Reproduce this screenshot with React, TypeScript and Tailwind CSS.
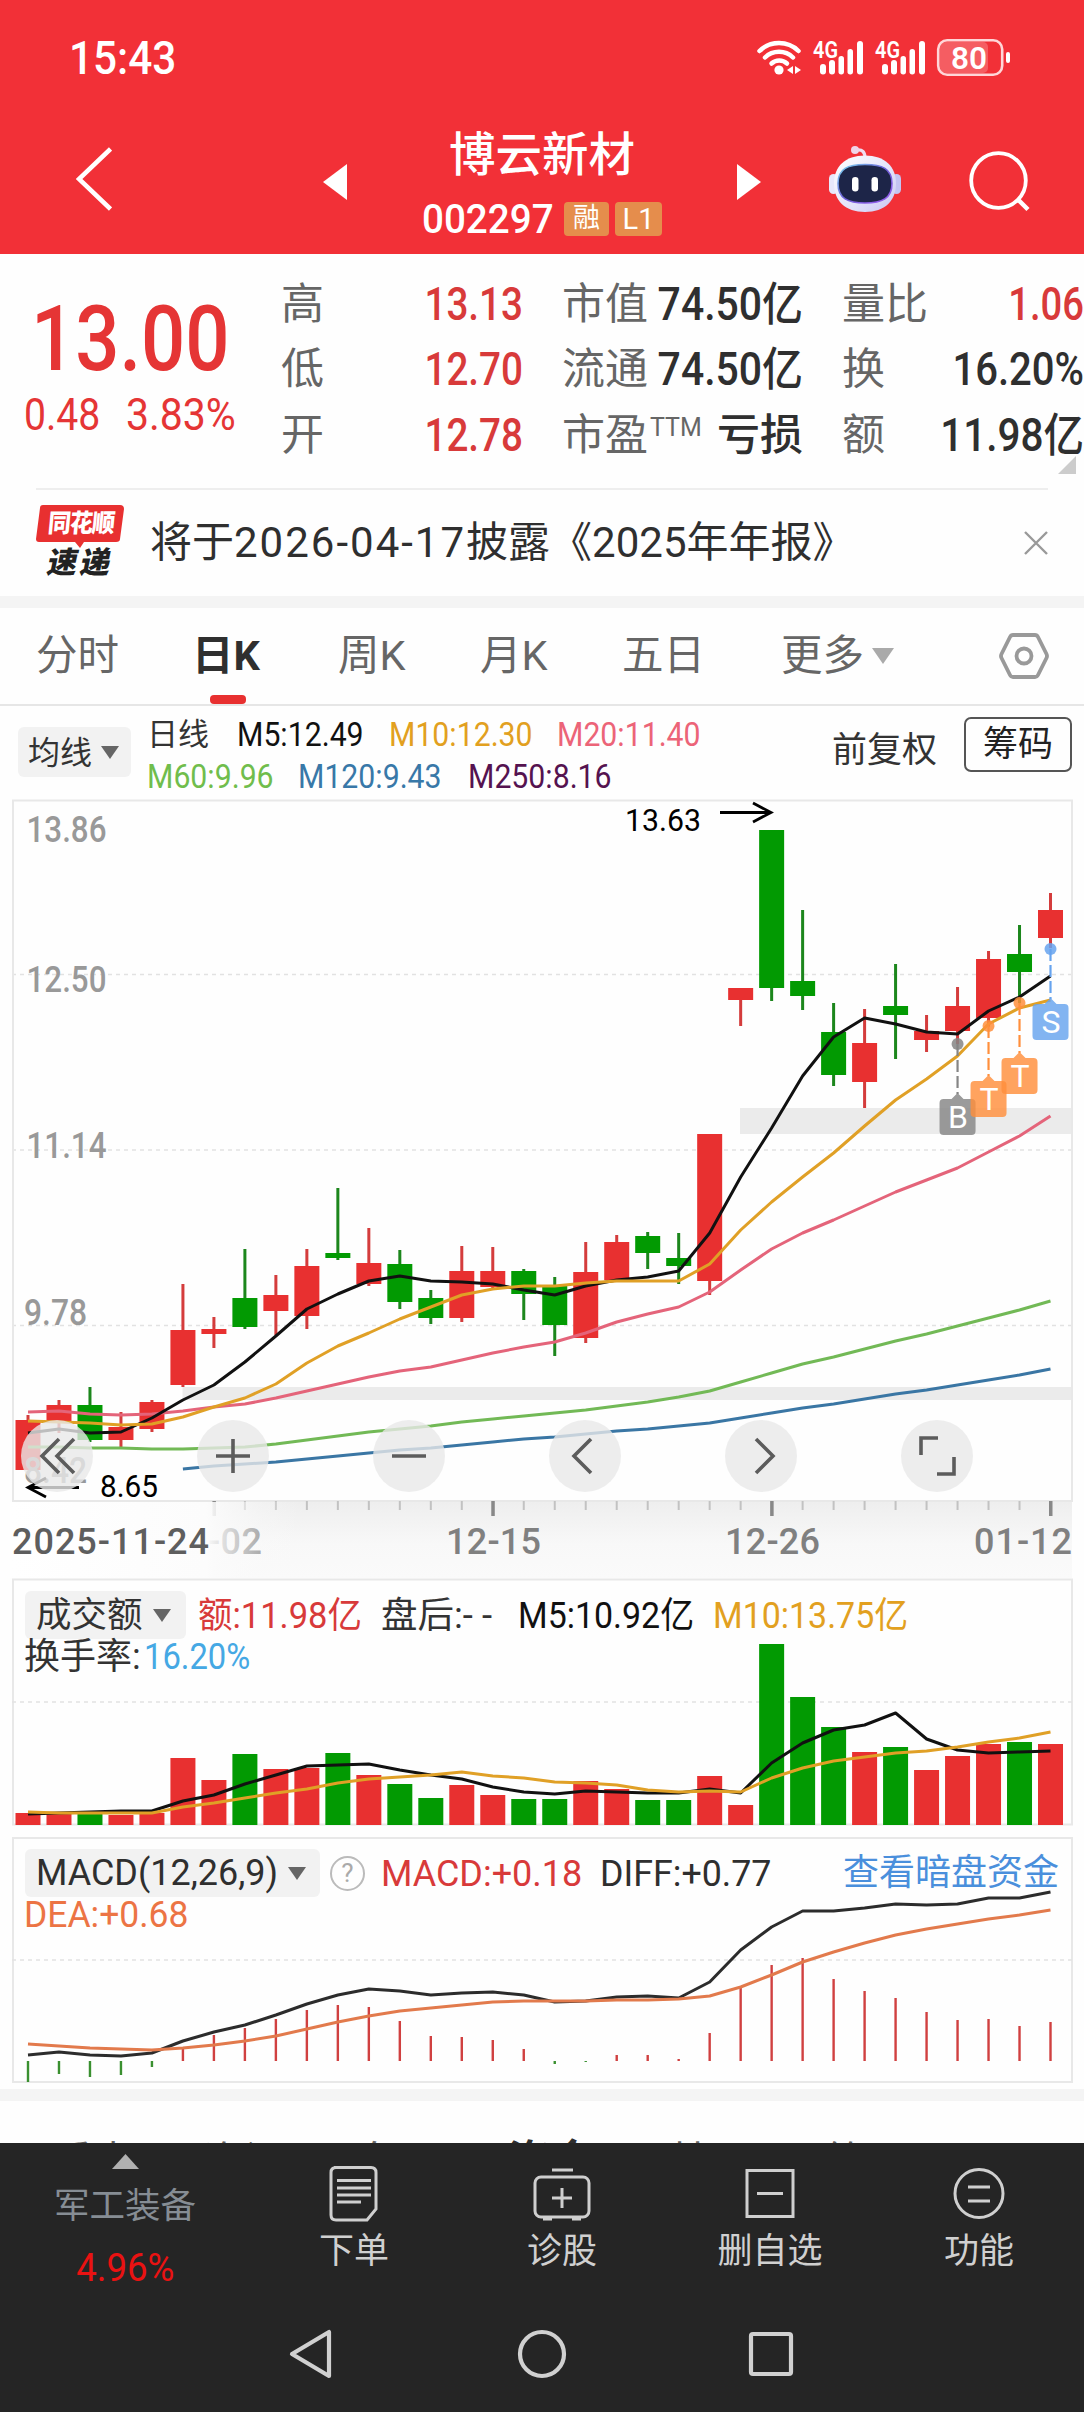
import type { ReactNode } from "react";

const red = "#e83030";
const green = "#029a02";

// [up/down, high, body top, body bottom, low]
type Candle = [string, number, number, number, number];

const candles: Candle[] = [
  ["r", 1415, 1420, 1470, 1470],
  ["r", 1400, 1405, 1421, 1433],
  ["g", 1387, 1405, 1440, 1442],
  ["r", 1412, 1427, 1440, 1447],
  ["r", 1400, 1402, 1429, 1432],
  ["r", 1284, 1330, 1385, 1387],
  ["r", 1317, 1329, 1334, 1348],
  ["g", 1249, 1298, 1327, 1329],
  ["r", 1275, 1295, 1311, 1335],
  ["r", 1249, 1266, 1316, 1329],
  ["g", 1188, 1253, 1258, 1260],
  ["r", 1228, 1263, 1284, 1286],
  ["g", 1250, 1264, 1302, 1309],
  ["g", 1290, 1298, 1318, 1324],
  ["r", 1246, 1271, 1318, 1322],
  ["r", 1247, 1271, 1287, 1289],
  ["g", 1269, 1271, 1294, 1320],
  ["g", 1277, 1285, 1325, 1356],
  ["r", 1242, 1272, 1338, 1343],
  ["r", 1235, 1242, 1280, 1280],
  ["g", 1232, 1236, 1253, 1269],
  ["g", 1233, 1258, 1266, 1284],
  ["r", 1134, 1134, 1281, 1295],
  ["r", 988, 988, 1000, 1026],
  ["g", 830, 830, 988, 1001],
  ["g", 910, 981, 996, 1010],
  ["g", 1003, 1032, 1075, 1086],
  ["r", 1009, 1043, 1082, 1108],
  ["g", 964, 1006, 1015, 1059],
  ["r", 1015, 1031, 1040, 1052],
  ["r", 987, 1006, 1031, 1044],
  ["r", 951, 959, 1018, 1027],
  ["g", 925, 954, 972, 1003],
  ["r", 893, 910, 938, 948],
];

const ma5 = [1433, 1429, 1433, 1432, 1418, 1400, 1385, 1362, 1336, 1309, 1294, 1281, 1276, 1281, 1282, 1284, 1290, 1295, 1286, 1280, 1277, 1271, 1233, 1177, 1128, 1076, 1037, 1018, 1024, 1032, 1034, 1011, 997, 976];
const ma10 = [1421, 1422, 1423, 1425, 1424, 1417, 1407, 1398, 1384, 1363, 1346, 1333, 1319, 1307, 1295, 1289, 1286, 1286, 1283, 1281, 1281, 1281, 1264, 1230, 1202, 1177, 1153, 1126, 1100, 1079, 1056, 1024, 1008, 1000];
const ma20 = [1412, 1411, 1414, 1415, 1414, 1411, 1407, 1404, 1398, 1391, 1384, 1377, 1371, 1367, 1360, 1353, 1347, 1342, 1333, 1322, 1314, 1307, 1292, 1270, 1249, 1233, 1220, 1206, 1192, 1180, 1168, 1152, 1136, 1116];
const ma60 = [1447, 1447, 1448, 1448, 1449, 1449, 1448, 1447, 1444, 1440, 1436, 1432, 1429, 1426, 1422, 1419, 1416, 1413, 1410, 1406, 1402, 1397, 1391, 1382, 1373, 1364, 1357, 1349, 1341, 1334, 1326, 1318, 1310, 1301];
const ma120 = [1469, 1466, 1464, 1462, 1459, 1456, 1453, 1450, 1448, 1445, 1442, 1439, 1437, 1434, 1431, 1429, 1426, 1423, 1418, 1413, 1408, 1404, 1399, 1394, 1390, 1385, 1380, 1375, 1369];

const volume = [1813, 1814, 1814, 1815, 1813, 1758, 1780, 1754, 1769, 1768, 1753, 1775, 1784, 1798, 1785, 1795, 1799, 1799, 1781, 1789, 1800, 1800, 1776, 1805, 1644, 1697, 1727, 1752, 1747, 1770, 1756, 1744, 1742, 1744];
const volumeMa5 = [1814, 1813, 1812, 1811, 1811, 1801, 1795, 1784, 1775, 1766, 1765, 1764, 1770, 1775, 1779, 1787, 1792, 1794, 1791, 1792, 1793, 1793, 1789, 1793, 1763, 1743, 1730, 1725, 1713, 1739, 1750, 1753, 1752, 1751];
const volumeMa10 = [1812, 1813, 1813, 1813, 1813, 1807, 1803, 1798, 1793, 1789, 1783, 1779, 1777, 1775, 1772, 1776, 1778, 1782, 1783, 1785, 1790, 1792, 1791, 1792, 1778, 1768, 1761, 1757, 1753, 1751, 1747, 1742, 1738, 1732];

const macd = [2082, 2074, 2077, 2075, 2067, 2049, 2035, 2028, 2019, 2010, 2005, 2007, 2021, 2036, 2037, 2040, 2049, 2064, 2062, 2055, 2055, 2059, 2033, 1987, 1965, 1958, 1979, 1991, 1998, 2012, 2020, 2019, 2026, 2022];
const diff = [2055, 2052, 2055, 2056, 2053, 2041, 2032, 2025, 2015, 2004, 1995, 1989, 1991, 1995, 1993, 1992, 1995, 2002, 2001, 1997, 1996, 1998, 1982, 1950, 1927, 1911, 1911, 1908, 1904, 1905, 1904, 1898, 1898, 1892];
const dea = [2044, 2046, 2048, 2049, 2050, 2048, 2045, 2041, 2036, 2029, 2022, 2016, 2011, 2008, 2005, 2002, 2001, 2001, 2001, 2000, 2000, 1999, 1996, 1987, 1975, 1962, 1952, 1943, 1935, 1929, 1924, 1919, 1915, 1910];

const cx = (i: number) => 28 + i * 30.985;

function Line({ data, color, from = 0, width = 3 }: { data: number[]; color: string; from?: number; width?: number }) {
  const points = data.map((y, i) => `${cx(i + from).toFixed(1)},${y}`).join(" ");
  return <polyline points={points} fill="none" stroke={color} strokeWidth={width} strokeLinejoin="round" />;
}

function Grid({ y }: { y: number }) {
  return <line x1="12" x2="1072" y1={y} y2={y} stroke="#e2e2e2" strokeWidth="1.5" strokeDasharray="4 4" />;
}

type LabelProps = {
  x: number;
  y: number;
  w: number;
  size: number;
  fill: string;
  weight?: number;
  adjust?: "spacing" | "spacingAndGlyphs";
  children: string;
};

function Label({ x, y, w, size, fill, weight = 500, adjust = "spacingAndGlyphs", children }: LabelProps) {
  return (
    <text x={x} y={y} textLength={w} lengthAdjust={adjust} fontSize={size} fontWeight={weight} fill={fill}>
      {children}
    </text>
  );
}

function Caret({ className }: { className: string }) {
  return (
    <svg viewBox="0 0 18 13" className={className} fill="currentColor">
      <path d="M0 0h18L9 13z" />
    </svg>
  );
}

// Narrow digits; the box keeps its width and the text is squeezed towards one side.
function Num({ className = "", children }: { className?: string; children: ReactNode }) {
  return <span className={`block whitespace-nowrap ${className}`}>{children}</span>;
}

function StatusBar() {
  return (
    <div className="flex h-[114px] items-center pl-[69px] pt-[1px]">
      <Num className="w-[688px] origin-left scale-x-[0.90] text-[47px] font-medium leading-[60px]">15:43</Num>
      <svg viewBox="757 30 254 52" className="h-[52px] w-[254px]">
        <g fill="none" stroke="#fff" strokeWidth="4.5" strokeLinecap="round">
          <path d="M759.500 49a28 28 0 0 1 39 0" />
          <path d="M765 55.500a20 20 0 0 1 28 0" />
          <path d="M771.500 61.500a11.500 11.500 0 0 1 15.500 0" />
        </g>
        <circle cx="779" cy="68" r="4.600" fill="#fff" />
        <path d="M793 64v8l-6-4zM795 64v8l6-4z" fill="#fff" />
        {[0, 62].map((dx) => (
          <g key={dx} transform={`translate(${dx} 0)`} fill="#fff">
            <text x="813" y="55.500" fontSize="23" fontWeight="600" textLength="25" lengthAdjust="spacingAndGlyphs">4G</text>
            <rect x="820" y="62" width="6" height="10.500" rx="3" />
            <rect x="829" y="58" width="6" height="14.500" rx="3" />
            <rect x="838.500" y="54" width="5.500" height="18.500" rx="2.700" />
            <rect x="847.500" y="47" width="5.500" height="25.500" rx="2.700" />
            <rect x="857" y="39" width="6" height="33.500" rx="3" />
          </g>
        ))}
        <rect x="940" y="40" width="48" height="31" rx="5" fill="#fff" fillOpacity="0.220" />
        <rect x="938.200" y="38.200" width="64" height="34.600" rx="9" fill="none" stroke="#ffd6d8" strokeWidth="2.600" />
        <rect x="1006" y="50" width="4" height="11" rx="2" fill="#fff" />
        <text x="951" y="66.500" fontSize="32" fontWeight="600" fill="#fff" textLength="36" lengthAdjust="spacingAndGlyphs">80</text>
      </svg>
    </div>
  );
}

function Robot() {
  return (
    <svg viewBox="828 145 74 68" className="ml-[67px] mt-[31px] h-[68px] w-[74px]">
      <defs>
        <linearGradient id="shell" x1="0" y1="0" x2="1" y2="1">
          <stop offset="0" stopColor="#fff" />
          <stop offset="0.600" stopColor="#e2e2fa" />
          <stop offset="1" stopColor="#c9c6f2" />
        </linearGradient>
        <linearGradient id="rim" x1="0" y1="0" x2="1" y2="1">
          <stop offset="0" stopColor="#7ad6f0" />
          <stop offset="0.500" stopColor="#6f5fd8" />
          <stop offset="1" stopColor="#9a5cf0" />
        </linearGradient>
      </defs>
      <path d="M857 150q8-1 8 8" fill="none" stroke="#efdcf0" strokeWidth="3.200" />
      <circle cx="855" cy="150" r="4" fill="#f0d4e8" />
      <rect x="829" y="174" width="9" height="20" rx="4.500" fill="#e8e8fb" />
      <rect x="892" y="174" width="9" height="20" rx="4.500" fill="#c4c4f2" />
      <path d="M865 155.500c20 0 31 11 31 28s-11 28.500-31 28.500-31-11.500-31-28.500 11-28 31-28z" fill="url(#shell)" />
      <path d="M865 164.500c17 0 27 4 27 19s-10 19.500-27 19.500-27-4.500-27-19.500 10-19 27-19z" fill="#1d2548" stroke="url(#rim)" strokeWidth="1.600" />
      <rect x="852" y="177" width="6.500" height="14.500" rx="3.200" fill="#fff" />
      <rect x="871.500" y="177" width="6.500" height="14.500" rx="3.200" fill="#fff" />
    </svg>
  );
}

function Header() {
  return (
    <header className="h-[254px] bg-[#f23037] text-white">
      <StatusBar />
      <div className="flex h-[140px] items-start">
        <svg viewBox="0 0 36 64" className="ml-[76px] mt-[33px] h-[64px] w-[36px]" fill="none" stroke="#fff" strokeWidth="4.500">
          <path d="M34.500 2L3 32l31.500 30" />
        </svg>
        <svg viewBox="0 0 24 36" className="ml-[211px] mt-[50px] h-[36px] w-[24px]" fill="#fff"><path d="M24 0v36L0 18z" /></svg>
        <div className="ml-[45px] flex w-[300px] flex-col items-center pt-px">
          <h1 className="text-[46.500px] font-medium leading-[80px]">博云新材</h1>
          <div className="flex h-[48px] w-[240px] items-center">
            <Num className="w-[142px] origin-left scale-x-[0.930] text-[41.500px] font-medium leading-[48px]">002297</Num>
            <span className="h-[34px] w-[45px] rounded-[4px] bg-[#e58d4c] text-center text-[27px] leading-[33px]">融</span>
            <span className="ml-[6px] h-[34px] w-[47px] rounded-[4px] bg-[#e58d4c] text-center text-[29px] leading-[35px]">L1</span>
          </div>
        </div>
        <svg viewBox="0 0 24 36" className="ml-[45px] mt-[50px] h-[36px] w-[24px]" fill="#fff"><path d="M0 0v36l24-18z" /></svg>
        <Robot />
        <svg viewBox="0 0 62 62" className="ml-[67px] mt-[37px] h-[62px] w-[62px]" fill="none" stroke="#fff" strokeWidth="3.800">
          <circle cx="29.500" cy="29.500" r="27.300" />
          <path d="M48.500 48L59 58.500" strokeWidth="4.500" />
        </svg>
      </div>
    </header>
  );
}

function Stat({ label, sup, value, className = "" }: { label: string; sup?: string; value: string; className?: string }) {
  return (
    <div className="flex h-[65.500px] items-center justify-between">
      <span className="flex items-center whitespace-nowrap text-[43px] leading-[60px] text-[#666]">
        {label}
        {sup ? <span className="mb-[13px] ml-[2px] text-[25px] leading-[30px]">{sup}</span> : null}
      </span>
      <Num className={`w-0 origin-right font-medium leading-[60px] ${className}`}>
        <span className="float-right">{value}</span>
      </Num>
    </div>
  );
}

function Quote() {
  return (
    <section className="relative flex h-[234px]">
      <div className="w-[281px] pl-[31px] pt-[34px] text-[#e53535]">
        <Num className="origin-left scale-x-[0.865] text-[90px] font-medium leading-[104px]">13.00</Num>
        <div className="-ml-[7px] -mt-px flex">
          <Num className="w-[102px] origin-left scale-x-[0.870] text-[45px] leading-[48px]">0.48</Num>
          <Num className="w-[150px] origin-left scale-x-[0.910] text-[45px] leading-[48px]">3.83%</Num>
        </div>
      </div>
      <div className="grid w-[803px] grid-cols-[242px_241px_242px] gap-x-[39px] pt-[17px]">
        <div>
          <Stat label="高" value="13.13" className="scale-x-[0.840] text-[46px] text-[#d83a3a]" />
          <Stat label="低" value="12.70" className="scale-x-[0.840] text-[46px] text-[#d83a3a]" />
          <Stat label="开" value="12.78" className="scale-x-[0.840] text-[46px] text-[#d83a3a]" />
        </div>
        <div>
          <Stat label="市值" value="74.50亿" className="scale-x-[0.890] text-[46px] text-[#2f2f2f]" />
          <Stat label="流通" value="74.50亿" className="scale-x-[0.890] text-[46px] text-[#2f2f2f]" />
          <Stat label="市盈" sup="TTM" value="亏损" className="text-[43px] text-[#2f2f2f]" />
        </div>
        <div>
          <Stat label="量比" value="1.06" className="scale-x-[0.830] text-[46px] text-[#d83a3a]" />
          <Stat label="换" value="16.20%" className="scale-x-[0.870] text-[46px] text-[#2f2f2f]" />
          <Stat label="额" value="11.98亿" className="scale-x-[0.880] text-[46px] text-[#2f2f2f]" />
        </div>
      </div>
      <svg viewBox="0 0 18 18" className="absolute bottom-[14px] right-[8px] size-[18px]" fill="#ccc"><path d="M18 0v18H0z" /></svg>
    </section>
  );
}

function News() {
  return (
    <section className="mx-[36px] flex h-[108px] items-center border-t-2 border-[#eee]">
      <div className="relative flex w-[89px] flex-col items-center">
        <svg viewBox="0 0 88 50" className="absolute left-0 top-0 h-[50px] w-[88px]">
          <path d="M7 0h77q4 0 4 4l-4 30q0 3-4 3H48l-4 6-5-6H3q-3 0-3-3L4 3q0-3 3-3z" fill={red} />
        </svg>
        <span className="relative -skew-x-6 scale-y-110 text-[23px] font-black leading-[38px] tracking-[-1px] text-white">同花顺</span>
        <span className="mt-[2px] -skew-x-12 text-[30px] font-black leading-[36px] tracking-[3px] text-[#222]">速递</span>
      </div>
      <p className="ml-[25px] whitespace-nowrap text-[42px] leading-[60px] text-[#2f2f2f]">
        将于<span className="tracking-[2px]">2026-04-17</span>披露《2025年年报》
      </p>
      <svg viewBox="0 0 24 24" className="ml-auto size-[24px]" stroke="#999" strokeWidth="2.400"><path d="M1 1l22 22M23 1L1 23" /></svg>
    </section>
  );
}

function Tabs() {
  return (
    <nav className="flex h-[98px] items-center border-b-2 border-[#e6e6e6] pl-[36px] text-[41.500px] leading-[98px] text-[#666]">
      <span className="w-[156px]">分时</span>
      <span className="relative w-[146px] font-bold text-[#2f2f2f]">
        日K
        <i className="absolute bottom-px left-[18px] h-[9px] w-[36px] rounded-[4px] bg-[#e83030]" />
      </span>
      <span className="w-[142px]">周K</span>
      <span className="w-[142px]">月K</span>
      <span className="w-[159px]">五日</span>
      <span className="flex w-[218px] items-center">
        更多
        <Caret className="ml-[8px] h-[18px] w-[22px] text-[#aaa]" />
      </span>
      <svg viewBox="0 0 50 46" className="h-[46px] w-[50px]" fill="none" stroke="#999" strokeWidth="3.800" strokeLinejoin="round">
        <path d="M14 2h22q2 0 3 2l8.500 17q1 2 0 4L39 42q-1 2-3 2H14q-2 0-3-2L2.500 25q-1-2 0-4L11 4q1-2 3-2z" />
        <circle cx="25" cy="23" r="7.500" />
      </svg>
    </nav>
  );
}

function MaBar() {
  return (
    <section className="flex h-[92px] pl-[18px]">
      <div className="mt-[21px] flex h-[50px] w-[113px] items-center rounded-[6px] bg-[#f2f2f2] pl-[10px] pt-px text-[32px] text-[#333]">
        均线
        <Caret className="ml-[9px] h-[13px] w-[18px] text-[#666]" />
      </div>
      <div className="ml-[16px] w-[685px] pt-[8px] text-[32.500px] leading-[42px]">
        <div className="flex">
          <span className="w-[90px] text-[31px] text-[#333]">日线</span>
          <Num className="w-[152px] origin-left scale-x-[0.930] text-[#111]">M5:12.49</Num>
          <Num className="w-[168px] origin-left scale-x-[0.930] text-[#e2a020]">M10:12.30</Num>
          <Num className="w-[168px] origin-left scale-x-[0.930] text-[#ec6478]">M20:11.40</Num>
        </div>
        <div className="flex">
          <Num className="w-[151px] origin-left scale-x-[0.930] text-[#70bd4c]">M60:9.96</Num>
          <Num className="w-[170px] origin-left scale-x-[0.930] text-[#3878a8]">M120:9.43</Num>
          <Num className="w-[168px] origin-left scale-x-[0.930] text-[#551350]">M250:8.16</Num>
        </div>
      </div>
      <span className="mt-[24px] w-[132px] whitespace-nowrap text-[35px] leading-[42px] text-[#333]">前复权</span>
      <span className="mt-[11px] h-[55px] w-[108px] rounded-[7px] border-2 border-[#555] text-center text-[35px] leading-[51px] text-[#222]">筹码</span>
    </section>
  );
}

const markers = [
  { i: 30, dot: 1044, top: 1099, label: "B", color: "#858585" },
  { i: 31, dot: 1026, top: 1081, label: "T", color: "#ff8f3c" },
  { i: 32, dot: 1003, top: 1058, label: "T", color: "#ff8f3c" },
  { i: 33, dot: 949, top: 1004, label: "S", color: "#66a3ee" },
];

function Markers() {
  return (
    <g>
      {markers.map((m) => {
        const x = cx(m.i);
        return (
          <g key={m.i}>
            <circle cx={x} cy={m.dot} r="6" fill={m.color} fillOpacity="0.850" />
            <line x1={x} x2={x} y1={m.dot} y2={m.top - 5} stroke={m.color} strokeWidth="2.200" strokeDasharray="12 4" />
            <path d={`M${x - 14} ${m.top}h8l6-6 6 6h8q4 0 4 4v28q0 4-4 4h-28q-4 0-4-4v-28q0-4 4-4z`} fill={m.color} fillOpacity="0.820" />
            <text x={x + 0.500} y={m.top + 29} textAnchor="middle" fontSize="32" fill="#fff">{m.label}</text>
          </g>
        );
      })}
    </g>
  );
}

function KLineChart() {
  return (
    <svg viewBox="0 798 1084 780" className="block h-[780px] w-[1084px]">
      <defs>
        <linearGradient id="axis" x1="0" y1="0" x2="0" y2="1">
          <stop offset="0" stopColor="#eeeeee" />
          <stop offset="0.550" stopColor="#f8f8f8" />
          <stop offset="1" stopColor="#fafafa" />
        </linearGradient>
        <linearGradient id="fade" x1="0" y1="0" x2="1" y2="0">
          <stop offset="0" stopColor="#fcfcfc" />
          <stop offset="0.100" stopColor="#fbfbfb" stopOpacity="0.850" />
          <stop offset="0.550" stopColor="#fafafa" stopOpacity="0.350" />
          <stop offset="1" stopColor="#fafafa" stopOpacity="0" />
        </linearGradient>
        <linearGradient id="edge" x1="0" y1="0" x2="1" y2="0">
          <stop offset="0" stopColor="#fff" />
          <stop offset="1" stopColor="#fcfcfc" />
        </linearGradient>
      </defs>
      <rect x="12" y="1502" width="1060" height="76" fill="url(#axis)" />
      <rect x="740" y="1108" width="332" height="26" fill="#ebebeb" />
      <rect x="182.500" y="1387" width="889.500" height="13" fill="#ebebeb" />
      <Grid y={974.500} />
      <Grid y={1150} />
      <Grid y={1325.500} />
      <rect x="13" y="800.500" width="1059" height="700.500" fill="none" stroke="#e8e8e8" strokeWidth="2" />

      <Label x={26.500} y={842} w={80} size={36} fill="#999">13.86</Label>
      <Label x={26.500} y={992} w={80} size={36} fill="#999">12.50</Label>
      <Label x={26.500} y={1158} w={80} size={36} fill="#999">11.14</Label>
      <Label x={24} y={1325} w={63} size={36} fill="#999">9.78</Label>

      {candles.map(([dir, high, top, bottom, low], i) => (
        <g key={i} fill={dir === "r" ? red : green}>
          <rect x={cx(i) - 1.500} y={high} width="3" height={low - high} fill={dir === "r" ? "#d43c3c" : "#1c861c"} />
          <rect x={cx(i) - 12.500} y={top} width="25" height={bottom - top} />
        </g>
      ))}
      <Label x={24} y={1483} w={63} size={36} fill="#999">8.42</Label>

      <Line data={ma60} color="#72b956" />
      <Line data={ma120} color="#3a76a4" from={5} />
      <Line data={ma20} color="#e4647a" />
      <Line data={ma5} color="#111" />
      <Line data={ma10} color="#e0a026" />
      <Markers />

      <Label x={625} y={830.500} w={76} size={31} fill="#000" weight={400}>13.63</Label>
      <path d="M720 812.500h50M753 803l18 9.500-18 9.500" fill="none" stroke="#000" strokeWidth="2.800" />
      <Label x={100} y={1497} w={58} size={31} fill="#000" weight={400}>8.65</Label>
      <path d="M79 1487.500H29M46 1478l-18 9.500 18 9.500" fill="none" stroke="#000" strokeWidth="2.800" />

      {candles.map((_, i) =>
        i < 6 ? null : i % 9 === 6 ? (
          <rect key={i} x={cx(i) - 1.500} y="1501" width="3.500" height="15" fill="#888" />
        ) : (
          <rect key={i} x={cx(i) - 1} y="1501" width="2" height="9" fill="#c2c2c2" />
        ),
      )}
      <Label x={166} y={1554} w={96} size={36} fill="#888" adjust="spacing">12-02</Label>
      <Label x={446} y={1554} w={95} size={36} fill="#808080" adjust="spacing">12-15</Label>
      <Label x={725} y={1554} w={95} size={36} fill="#808080" adjust="spacing">12-26</Label>
      <Label x={974} y={1554} w={98} size={36} fill="#808080" adjust="spacing">01-12</Label>
      <rect x="10" y="1502" width="196" height="76" fill="url(#edge)" />
      <rect x="206" y="1502" width="94" height="76" fill="url(#fade)" />
      <Label x={12} y={1554} w={197} size={36} fill="#5e5e5e" adjust="spacing">2025-11-24</Label>
    </svg>
  );
}

const controls = [
  "M38 19L21 36l17 17M53 19L36 36l17 17",
  "M19 36h34M36 19v34",
  "M19 36h34",
  "M42 19L25 36l17 17",
  "M31 19l17 17-17 17",
  "M20 35V18h17M53 37v17H36",
];

function ChartControls() {
  return (
    <div className="absolute bottom-[86px] left-[21px] flex gap-[104px]">
      {controls.map((d) => (
        <button key={d} className="size-[72px] rounded-full bg-[#e8e8e8]/80">
          <svg viewBox="0 0 72 72" className="size-[72px]" fill="none" stroke="#5c5c5c" strokeWidth="3.600"><path d={d} /></svg>
        </button>
      ))}
    </div>
  );
}

function VolumePanel() {
  return (
    <section className="relative h-[250px]">
      <svg viewBox="0 1578 1084 250" className="absolute inset-0 h-[250px] w-[1084px]">
        <rect x="13" y="1579.500" width="1059" height="245" fill="none" stroke="#e8e8e8" strokeWidth="2" />
        <Grid y={1702} />
        {volume.map((y, i) => (
          <rect key={i} x={cx(i) - 12.500} y={y} width="25" height={1825 - y} fill={candles[i][0] === "r" ? red : green} />
        ))}
        <Line data={volumeMa5} color="#111" />
        <Line data={volumeMa10} color="#e0a026" />
      </svg>
      <div className="relative flex pl-[25px] pt-[13px] text-[36.500px] leading-[50px]">
        <div className="flex h-[48px] w-[161px] items-center rounded-[6px] bg-[#f2f2f2] pl-[11px] text-[35.500px] text-[#333]">
          成交额
          <Caret className="ml-[10px] h-[13px] w-[18px] text-[#666]" />
        </div>
        <Num className="ml-[12px] w-[183px] origin-left scale-x-[0.945] text-[#d83a3a]">额:11.98亿</Num>
        <Num className="w-[137px] origin-left text-[#333]">盘后:<span className="tracking-[9px]">--</span></Num>
        <Num className="w-[195px] origin-left scale-x-[0.930] text-[#111]">M5:10.92亿</Num>
        <Num className="w-[200px] origin-left scale-x-[0.930] text-[#e2a020]">M10:13.75亿</Num>
      </div>
      <div className="relative -mt-[8px] flex pl-[24px] text-[36px] leading-[48px] text-[#333]">
        <span className="w-[120px] whitespace-nowrap">换手率:</span>
        <Num className="origin-left scale-x-[0.910] text-[#45a8e4]">16.20%</Num>
      </div>
    </section>
  );
}

function MacdPanel() {
  return (
    <section className="relative h-[261px]">
      <svg viewBox="0 1828 1084 261" className="absolute inset-0 h-[261px] w-[1084px]">
        <rect x="13" y="1838" width="1059" height="244" fill="none" stroke="#e8e8e8" strokeWidth="2" />
        <Grid y={1960} />
        {macd.map((y, i) => (
          <rect key={i} x={cx(i) - 1.200} y={Math.min(y, 2061)} width="2.400" height={Math.abs(2061 - y)} fill={y < 2061 ? "#d04040" : "#3a9030"} />
        ))}
        <Line data={diff} color="#2c2c2c" />
        <Line data={dea} color="#e27a4c" />
      </svg>
      <div className="relative flex pl-[25px] pt-[21px] text-[36.500px] leading-[50px]">
        <div className="flex h-[48px] w-[295px] items-center rounded-[6px] bg-[#f2f2f2] pl-[11px] text-[#2f2f2f]">
          <Num className="w-[252px] origin-left scale-x-[0.985]">MACD(12,26,9)</Num>
          <Caret className="h-[13px] w-[18px] shrink-0 text-[#666]" />
        </div>
        <span className="ml-[10px] mt-[7px] size-[35px] rounded-full border-[2.500px] border-[#bbb] text-center text-[26px] leading-[31px] text-[#aaa]">?</span>
        <Num className="ml-[16px] w-[219px] origin-left scale-x-[0.985] text-[#d83a3a]">MACD:+0.18</Num>
        <Num className="w-[243px] origin-left scale-x-[0.980] text-[#2f2f2f]">DIFF:+0.77</Num>
        <span className="text-[36px] leading-[48px] text-[#4a8fdc]">查看暗盘资金</span>
      </div>
      <Num className="relative -mt-[8px] ml-[24px] origin-left scale-x-[0.985] text-[36px] leading-[48px] text-[#ec7444]">DEA:+0.68</Num>
    </section>
  );
}

function NextSection() {
  return (
    <section className="h-[54px] overflow-hidden border-t-12 border-[#f4f4f4]">
      <div className="flex whitespace-nowrap pl-[52px] pt-[31px] text-[41px] leading-[60px] text-[#666]">
        <span className="w-[151px]">看点</span>
        <span className="w-[151px]">资讯</span>
        <span className="w-[154px]">盘口</span>
        <span className="-mt-px w-[160px] text-[43px] font-bold text-[#2f2f2f]">资金</span>
        <span className="w-[157px]">基面</span>
        <span>简况(F10)</span>
      </div>
    </section>
  );
}

function Action({ label, className, children }: { label: string; className: string; children: ReactNode }) {
  return (
    <div className={`flex flex-col items-center pt-[22px] ${className}`}>
      <svg viewBox="0 0 60 58" className="h-[58px] w-[60px]" fill="none" stroke="#cfcfcf" strokeWidth="3">
        {children}
      </svg>
      <span className="mt-[6px] text-[35px] leading-[46px] text-[#d0d0d0]">{label}</span>
    </div>
  );
}

function BottomBar() {
  return (
    <footer className="h-[269px] bg-[#252525]">
      <div className="flex h-[163px]">
        <div className="flex w-[250px] flex-col items-center pt-[11px]">
          <svg viewBox="0 0 27 15" className="h-[15px] w-[27px]" fill="#b0b0b0"><path d="M0 15L13.500 0 27 15z" /></svg>
          <span className="mt-[13px] text-[35.500px] leading-[48px] text-[#868d94]">军工装备</span>
          <span className="mt-[14px] scale-x-[0.940] text-[39px] leading-[48px] text-[#ea1212]">4.96%</span>
        </div>
        <Action label="下单" className="w-[208px]">
          <path d="M10 2.500h37q5 0 5 5V44L43 55H12q-5 0-5-5V7.500q0-5 5-5z" />
          <path d="M13 15.500h34M13 23h34M13 30h34M13 37h24" />
        </Action>
        <Action label="诊股" className="w-[208px]">
          <rect x="3" y="12" width="54" height="40" rx="6" />
          <path d="M20 5h21M30 23v20M20 33h20M11 54h9M40 54h9" />
        </Action>
        <Action label="删自选" className="w-[208px]">
          <rect x="7" y="5.500" width="46" height="46" />
          <path d="M17 28.500h26" />
        </Action>
        <Action label="功能" className="w-[210px]">
          <circle cx="30" cy="28.500" r="24" />
          <path d="M19 22h22M19 36h22" />
        </Action>
      </div>
      <svg viewBox="0 2306 1084 106" className="block h-[106px] w-[1084px]" fill="none" stroke="#d0d0d0" strokeWidth="4.200" strokeLinejoin="round">
        <path d="M329 2332v44l-37-22z" />
        <circle cx="542" cy="2354" r="22" />
        <rect x="751" y="2334" width="40" height="40" rx="2" />
      </svg>
    </footer>
  );
}

export default function App() {
  return (
    <div className="flex h-[2412px] w-[1084px] flex-col overflow-hidden bg-[#fefefe] font-['Roboto','Noto_Sans_CJK_SC',sans-serif]">
      <Header />
      <Quote />
      <News />
      <div className="h-[12px] bg-[#f4f4f4]" />
      <Tabs />
      <MaBar />
      <div className="relative">
        <KLineChart />
        <ChartControls />
      </div>
      <VolumePanel />
      <MacdPanel />
      <NextSection />
      <BottomBar />
    </div>
  );
}
